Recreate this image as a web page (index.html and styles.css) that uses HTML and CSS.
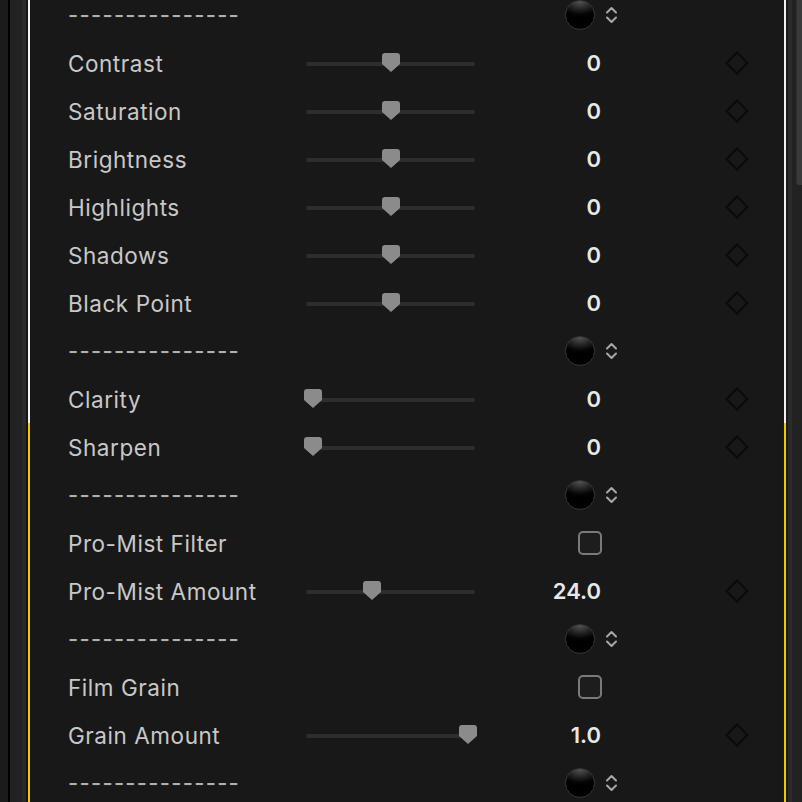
FILE: index.html
```html
<!DOCTYPE html>
<html>
<head>
<meta charset="utf-8">
<link rel="stylesheet" href="styles.css">
</head>
<body>
<div class="frame">
  <div class="gutter-left">
    <div class="g-a"></div><div class="g-b"></div><div class="g-c"></div><div class="g-d"></div><div class="g-e"></div>
  </div>
  <div class="panel">
    <div class="section white">
      <div class="rows first">
        <div class="row sep"><span class="dashes">---------------</span><div class="spin"><span class="ball"></span><svg class="chev" width="11" height="18" viewBox="0 0 11 18"><polyline points="1,6.5 5.5,2 10,6.5"/><polyline points="1,11.5 5.5,16 10,11.5"/></svg></div></div>
        <div class="row"><span class="label">Contrast</span><div class="slider"><span class="track"></span><svg class="thumb" style="left:76px" width="18" height="19" viewBox="0 0 18 19"><path d="M3 0H15Q18 0 18 3V11L9 19L0 11V3Q0 0 3 0Z"/></svg></div><span class="value">0</span><svg class="key" width="24" height="24" viewBox="0 0 24 24"><path d="M12 1.5L22.5 12L12 22.5L1.5 12Z"/></svg></div>
        <div class="row"><span class="label">Saturation</span><div class="slider"><span class="track"></span><svg class="thumb" style="left:76px" width="18" height="19" viewBox="0 0 18 19"><path d="M3 0H15Q18 0 18 3V11L9 19L0 11V3Q0 0 3 0Z"/></svg></div><span class="value">0</span><svg class="key" width="24" height="24" viewBox="0 0 24 24"><path d="M12 1.5L22.5 12L12 22.5L1.5 12Z"/></svg></div>
        <div class="row"><span class="label">Brightness</span><div class="slider"><span class="track"></span><svg class="thumb" style="left:76px" width="18" height="19" viewBox="0 0 18 19"><path d="M3 0H15Q18 0 18 3V11L9 19L0 11V3Q0 0 3 0Z"/></svg></div><span class="value">0</span><svg class="key" width="24" height="24" viewBox="0 0 24 24"><path d="M12 1.5L22.5 12L12 22.5L1.5 12Z"/></svg></div>
        <div class="row"><span class="label">Highlights</span><div class="slider"><span class="track"></span><svg class="thumb" style="left:76px" width="18" height="19" viewBox="0 0 18 19"><path d="M3 0H15Q18 0 18 3V11L9 19L0 11V3Q0 0 3 0Z"/></svg></div><span class="value">0</span><svg class="key" width="24" height="24" viewBox="0 0 24 24"><path d="M12 1.5L22.5 12L12 22.5L1.5 12Z"/></svg></div>
        <div class="row"><span class="label">Shadows</span><div class="slider"><span class="track"></span><svg class="thumb" style="left:76px" width="18" height="19" viewBox="0 0 18 19"><path d="M3 0H15Q18 0 18 3V11L9 19L0 11V3Q0 0 3 0Z"/></svg></div><span class="value">0</span><svg class="key" width="24" height="24" viewBox="0 0 24 24"><path d="M12 1.5L22.5 12L12 22.5L1.5 12Z"/></svg></div>
        <div class="row"><span class="label">Black Point</span><div class="slider"><span class="track"></span><svg class="thumb" style="left:76px" width="18" height="19" viewBox="0 0 18 19"><path d="M3 0H15Q18 0 18 3V11L9 19L0 11V3Q0 0 3 0Z"/></svg></div><span class="value">0</span><svg class="key" width="24" height="24" viewBox="0 0 24 24"><path d="M12 1.5L22.5 12L12 22.5L1.5 12Z"/></svg></div>
        <div class="row sep"><span class="dashes">---------------</span><div class="spin"><span class="ball"></span><svg class="chev" width="11" height="18" viewBox="0 0 11 18"><polyline points="1,6.5 5.5,2 10,6.5"/><polyline points="1,11.5 5.5,16 10,11.5"/></svg></div></div>
        <div class="row"><span class="label">Clarity</span><div class="slider"><span class="track"></span><svg class="thumb" style="left:-2px" width="18" height="19" viewBox="0 0 18 19"><path d="M3 0H15Q18 0 18 3V11L9 19L0 11V3Q0 0 3 0Z"/></svg></div><span class="value">0</span><svg class="key" width="24" height="24" viewBox="0 0 24 24"><path d="M12 1.5L22.5 12L12 22.5L1.5 12Z"/></svg></div>
      </div>
    </div>
    <div class="section yellow">
      <div class="rows">
        <div class="row"><span class="label">Sharpen</span><div class="slider"><span class="track"></span><svg class="thumb" style="left:-2px" width="18" height="19" viewBox="0 0 18 19"><path d="M3 0H15Q18 0 18 3V11L9 19L0 11V3Q0 0 3 0Z"/></svg></div><span class="value">0</span><svg class="key" width="24" height="24" viewBox="0 0 24 24"><path d="M12 1.5L22.5 12L12 22.5L1.5 12Z"/></svg></div>
        <div class="row sep"><span class="dashes">---------------</span><div class="spin"><span class="ball"></span><svg class="chev" width="11" height="18" viewBox="0 0 11 18"><polyline points="1,6.5 5.5,2 10,6.5"/><polyline points="1,11.5 5.5,16 10,11.5"/></svg></div></div>
        <div class="row"><span class="label">Pro-Mist Filter</span><span class="spacer"></span><span class="value"><span class="check"></span></span></div>
        <div class="row"><span class="label">Pro-Mist Amount</span><div class="slider"><span class="track"></span><svg class="thumb" style="left:57px" width="18" height="19" viewBox="0 0 18 19"><path d="M3 0H15Q18 0 18 3V11L9 19L0 11V3Q0 0 3 0Z"/></svg></div><span class="value">24.0</span><svg class="key" width="24" height="24" viewBox="0 0 24 24"><path d="M12 1.5L22.5 12L12 22.5L1.5 12Z"/></svg></div>
        <div class="row sep"><span class="dashes">---------------</span><div class="spin"><span class="ball"></span><svg class="chev" width="11" height="18" viewBox="0 0 11 18"><polyline points="1,6.5 5.5,2 10,6.5"/><polyline points="1,11.5 5.5,16 10,11.5"/></svg></div></div>
        <div class="row"><span class="label">Film Grain</span><span class="spacer"></span><span class="value"><span class="check"></span></span></div>
        <div class="row"><span class="label">Grain Amount</span><div class="slider"><span class="track"></span><svg class="thumb" style="left:153px" width="18" height="19" viewBox="0 0 18 19"><path d="M3 0H15Q18 0 18 3V11L9 19L0 11V3Q0 0 3 0Z"/></svg></div><span class="value">1.0</span><svg class="key" width="24" height="24" viewBox="0 0 24 24"><path d="M12 1.5L22.5 12L12 22.5L1.5 12Z"/></svg></div>
        <div class="row sep"><span class="dashes">---------------</span><div class="spin"><span class="ball"></span><svg class="chev" width="11" height="18" viewBox="0 0 11 18"><polyline points="1,6.5 5.5,2 10,6.5"/><polyline points="1,11.5 5.5,16 10,11.5"/></svg></div></div>
      </div>
    </div>
  </div>
  <div class="gutter-right">
    <div class="r-a"></div><div class="r-b"></div><div class="r-c"><div class="scroll-thumb"></div></div>
  </div>
</div>
</body>
</html>
```

FILE: styles.css
```css
html, body {
  margin: 0;
  padding: 0;
  background: #1a1a1a;
  overflow: hidden;
}
.frame {
  display: flex;
  width: 802px;
  height: 802px;
  overflow: hidden;
}
.gutter-left {
  display: flex;
  flex: 0 0 28px;
  height: 802px;
}
.g-a { width: 8px; background: #1b1b1b; }
.g-b { width: 2px; background: #000; }
.g-c { width: 12px; background: #222222; }
.g-d { width: 4px; background: #2a2a2a; }
.g-e { width: 2px; background: #151515; }
.panel {
  flex: 0 0 758px;
  display: flex;
  flex-direction: column;
  background: #181818;
}
.section {
  border-left: 2px solid #f2f2f2;
  border-right: 2px solid #f2f2f2;
  background: #181818;
}
.section.white {
  padding-bottom: 2px;
}
.section.yellow {
  flex: 1;
  border-color: #f6c700;
  margin-top: -2px;
}
.rows {
  display: flex;
  flex-direction: column;
}
.rows.first {
  margin-top: -9px;
}
.row {
  height: 48px;
  display: flex;
  align-items: center;
  padding-left: 38px;
  font-family: Inter, "Liberation Sans", sans-serif;
  font-size: 22.5px;
  color: #c8c8c8;
}
.label {
  width: 238px;
  flex: 0 0 238px;
  letter-spacing: 0.55px;
}
.spacer {
  flex: 0 0 169px;
}
.slider {
  position: relative;
  flex: 0 0 169px;
  height: 19px;
  margin-top: 1px;
  display: flex;
  align-items: center;
}
.track {
  display: block;
  width: 169px;
  height: 4px;
  border-radius: 2px;
  background: #2e2e2e;
}
.thumb {
  position: absolute;
  top: -1px;
  display: block;
}
.thumb path { fill: #8b8b8b; }
.value {
  flex: 0 0 126px;
  text-align: right;
  font-weight: 600;
  font-size: 22px;
  color: #e8e8e8;
  display: flex;
  justify-content: flex-end;
  align-items: center;
}
.key {
  margin-left: 124px;
  display: block;
}
.key path {
  fill: none;
  stroke: #0a0a0a;
  stroke-width: 2;
}
.check {
  display: block;
  width: 20px;
  height: 20px;
  border: 2px solid #7a7a7a;
  border-radius: 5px;
  background: #1d1d1d;
  margin-right: -1px;
}
.dashes {
  flex: 0 0 454px;
  color: #b0b0b0;
  font-size: 22px;
  letter-spacing: 1.3px;
  font-weight: 500;
}
.spin {
  display: flex;
  align-items: center;
  margin-left: 43px;
}
.ball {
  display: block;
  width: 28px;
  height: 28px;
  border-radius: 50%;
  border: 1px solid #353535;
  background: radial-gradient(ellipse 85% 60% at 50% 0%, #565656 0%, #222 50%, #050505 80%, #000 100%);
}
.chev {
  display: block;
  margin-left: 11px;
}
.chev polyline {
  fill: none;
  stroke: #a8a8a8;
  stroke-width: 2;
  stroke-linecap: round;
  stroke-linejoin: round;
}
.gutter-right {
  display: flex;
  flex: 0 0 16px;
  height: 802px;
}
.r-a { width: 2px; background: #1a1a1a; }
.r-b { width: 4px; background: #2b2b2b; }
.r-c {
  width: 10px;
  background: #222222;
  display: flex;
  justify-content: flex-end;
}
.scroll-thumb {
  width: 5px;
  height: 185px;
  background: #3a3a3a;
  border-left: 1px solid #2e2e2e;
  border-radius: 0 0 0 3px;
}
```
